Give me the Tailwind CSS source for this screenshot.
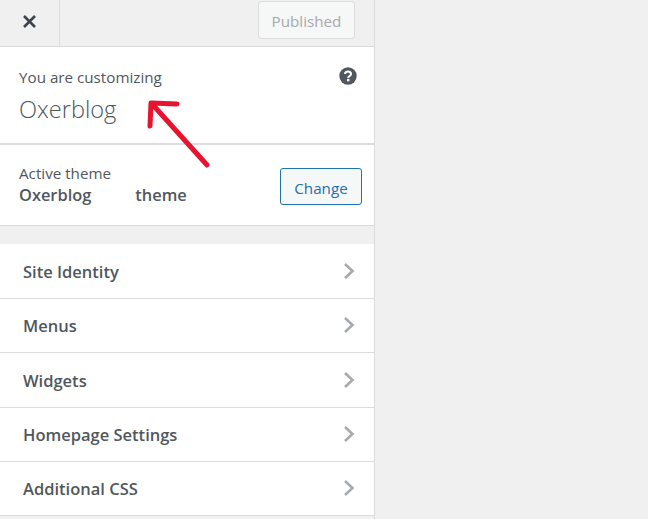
<!DOCTYPE html>
<html>
<head>
<meta charset="utf-8">
<script src="https://cdn.jsdelivr.net/npm/@tailwindcss/browser@4"></script>
</head>
<body class="m-0 bg-[#f0f0f1] font-['Open_Sans','Noto_Sans',sans-serif]">
<div class="relative w-[648px] h-[519px] overflow-hidden flex bg-[#f0f0f1]">
  <aside class="w-[375px] h-full border-r border-[#dcdcde] bg-[#f0f0f1] flex flex-col shrink-0">
    <header class="h-[47px] flex border-b border-[#dcdcde] shrink-0">
      <div class="w-[60px] border-r border-[#dcdcde] flex items-center justify-center pb-[4px]">
        <svg width="15" height="15" viewBox="0 0 15 15"><path d="M2 2 L13 13 M13 2 L2 13" stroke="#3c434a" stroke-width="2.6" fill="none"/></svg>
      </div>
      <div class="flex-1 flex justify-end items-start pt-[1px] pr-[19px]">
        <div class="w-[97px] h-[38px] pt-[2px] border border-[#dcdcde] rounded-[3px] bg-[#f6f7f7] text-[#a7aaad] text-[15.2px] flex items-center justify-center">Published</div>
      </div>
    </header>
    <section class="h-[98px] bg-white border-b-2 border-[#dcdcde] px-[19px] pt-[20px] relative shrink-0">
      <div class="text-[15.2px] leading-[20px] text-[#50575e]">You are customizing</div>
      <div class="text-[23.6px] font-light leading-[30px] mt-[7px] text-[#50575e]">Oxerblog</div>
      <svg class="absolute left-[339px] top-[20px]" width="18" height="18" viewBox="0 0 18 18"><circle cx="9" cy="9" r="8.7" fill="#50575e"/><path d="M6 7 C6 3.6 12 3.6 12 7 C12 9 9.2 9 9.2 11" stroke="#fff" stroke-width="2.1" fill="none"/><rect x="8" y="12" width="2.4" height="2.3" fill="#fff"/></svg>
    </section>
    <section class="h-[81px] bg-white border-b border-[#dcdcde] pl-[19px] pr-[12px] flex items-center justify-between shrink-0">
      <div class="pb-[1px]">
        <div class="text-[15.2px] leading-[20px] text-[#50575e]">Active theme</div>
        <div class="text-[16.4px] leading-[24px] font-semibold text-[#50575e] flex"><span>Oxerblog</span><span class="ml-[44px]">theme</span></div>
      </div>
      <div class="w-[82px] h-[37px] mt-[2px] pt-[4px] border border-[#2271b1] rounded-[3px] bg-[#f6f7f7] text-[#2271b1] text-[15.2px] flex items-center justify-center">Change</div>
    </section>
    <div class="h-[18px] shrink-0"></div>
    <ul class="flex flex-col">
      <li class="h-[55px] pt-[3px] bg-white border-b border-[#dcdcde] pl-[23px] pr-[19px] flex items-center justify-between text-[#50575e] text-[16.5px] font-semibold">Site Identity<svg class="mb-[4px]" width="12" height="18" viewBox="0 0 12 18"><path d="M2 2 L9.5 9 L2 16" stroke="#a7aaad" stroke-width="2.6" fill="none"/></svg></li>
      <li class="h-[54px] pt-[2px] bg-white border-b border-[#dcdcde] pl-[23px] pr-[19px] flex items-center justify-between text-[#50575e] text-[16.5px] font-semibold">Menus<svg class="mb-[4px]" width="12" height="18" viewBox="0 0 12 18"><path d="M2 2 L9.5 9 L2 16" stroke="#a7aaad" stroke-width="2.6" fill="none"/></svg></li>
      <li class="h-[55px] pt-[3px] bg-white border-b border-[#dcdcde] pl-[23px] pr-[19px] flex items-center justify-between text-[#50575e] text-[16.5px] font-semibold">Widgets<svg class="mb-[4px]" width="12" height="18" viewBox="0 0 12 18"><path d="M2 2 L9.5 9 L2 16" stroke="#a7aaad" stroke-width="2.6" fill="none"/></svg></li>
      <li class="h-[54px] pt-[2px] bg-white border-b border-[#dcdcde] pl-[23px] pr-[19px] flex items-center justify-between text-[#50575e] text-[16.5px] font-semibold">Homepage Settings<svg class="mb-[4px]" width="12" height="18" viewBox="0 0 12 18"><path d="M2 2 L9.5 9 L2 16" stroke="#a7aaad" stroke-width="2.6" fill="none"/></svg></li>
      <li class="h-[54px] pt-[2px] bg-white border-b border-[#dcdcde] pl-[23px] pr-[19px] flex items-center justify-between text-[#50575e] text-[16.5px] font-semibold">Additional CSS<svg class="mb-[4px]" width="12" height="18" viewBox="0 0 12 18"><path d="M2 2 L9.5 9 L2 16" stroke="#a7aaad" stroke-width="2.6" fill="none"/></svg></li>
    </ul>
  </aside>
  <svg class="absolute left-0 top-0 pointer-events-none" width="648" height="519" viewBox="0 0 648 519"><path d="M207 165 L153 105 M150 126 L151 103 L177 104" stroke="#e8132f" stroke-width="5" stroke-linecap="round" stroke-linejoin="round" fill="none"/></svg>
</div>
</body>
</html>
